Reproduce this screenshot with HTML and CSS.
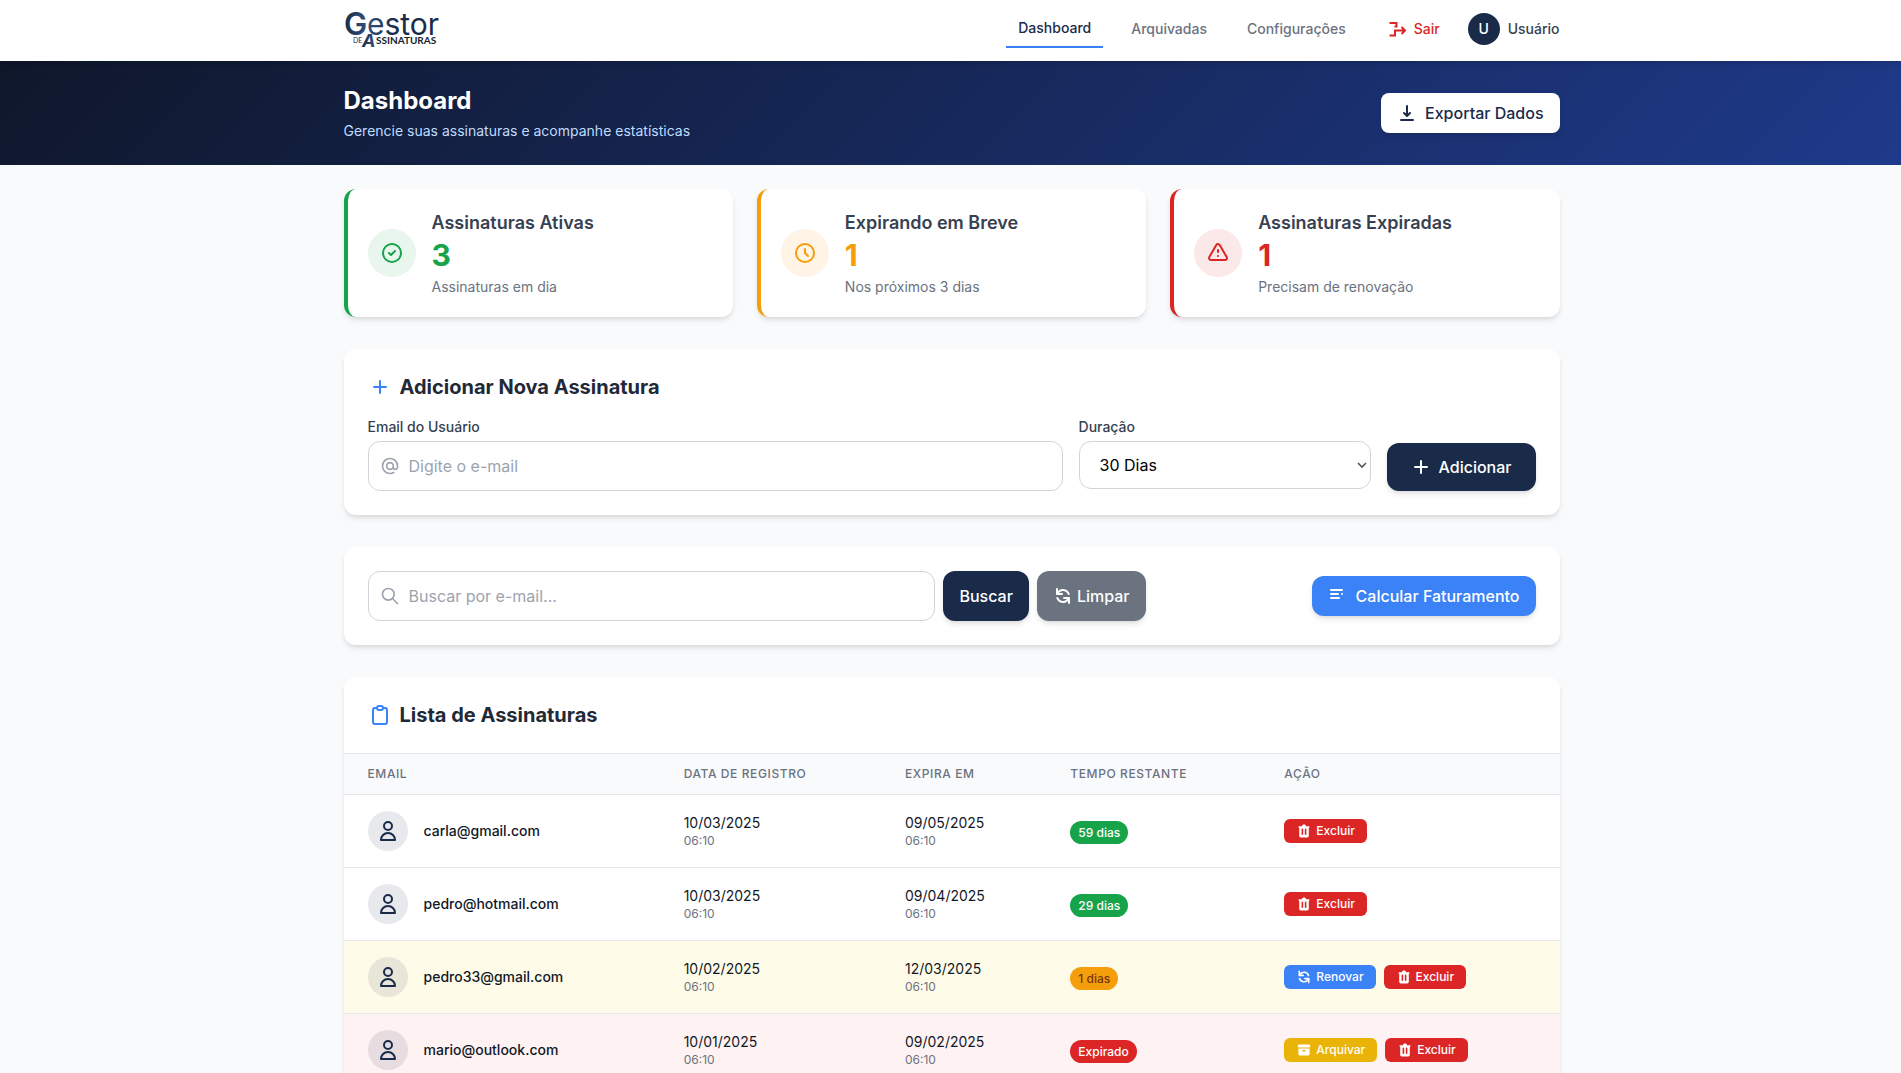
FILE: index.html
```html
<!DOCTYPE html>
<html lang="pt-BR">
<head>
<meta charset="utf-8">
<meta name="viewport" content="width=device-width, initial-scale=1">
<title>Gestor de Assinaturas</title>
<link rel="stylesheet" href="styles.css">
</head>
<body>
<svg class="sprite" aria-hidden="true">
  <symbol id="user" viewBox="0 0 24 24"><path class="line" d="M16 7a4 4 0 11-8 0 4 4 0 018 0zM12 14a7 7 0 00-7 7h14a7 7 0 00-7-7z"/></symbol>
  <symbol id="trash" viewBox="0 0 20 20"><path fill-rule="evenodd" d="M9 2a1 1 0 00-.894.553L7.382 4H4a1 1 0 000 2v10a2 2 0 002 2h8a2 2 0 002-2V6a1 1 0 100-2h-3.382l-.724-1.447A1 1 0 0011 2H9zM7 8a1 1 0 012 0v6a1 1 0 11-2 0V8zm5-1a1 1 0 00-1 1v6a1 1 0 102 0V8a1 1 0 00-1-1z"/></symbol>
  <symbol id="refresh" viewBox="0 0 20 20"><path fill-rule="evenodd" d="M4 2a1 1 0 011 1v2.101a7.002 7.002 0 0111.601 2.566 1 1 0 11-1.885.666A5.002 5.002 0 005.999 7H9a1 1 0 010 2H4a1 1 0 01-1-1V3a1 1 0 011-1zm.008 9.057a1 1 0 011.276.61A5.002 5.002 0 0014.001 13H11a1 1 0 110-2h5a1 1 0 011 1v5a1 1 0 11-2 0v-2.101a7.002 7.002 0 01-11.601-2.566 1 1 0 01.61-1.276z"/></symbol>
  <symbol id="archive" viewBox="0 0 20 20"><path d="M4 3a2 2 0 100 4h12a2 2 0 100-4H4z"/><path fill-rule="evenodd" d="M3 8h14v7a2 2 0 01-2 2H5a2 2 0 01-2-2V8zm5 3a1 1 0 011-1h2a1 1 0 110 2H9a1 1 0 01-1-1z"/></symbol>
</svg>

<header class="topbar">
  <div class="container topbar-inner">
    <a class="logo" href="#" aria-label="Gestor de Assinaturas">
      <svg width="98" height="38" viewBox="0 0 98 38">
        <defs>
          <linearGradient id="logo-fill" x1="0" y1="0" x2="1" y2="0">
            <stop offset="0" stop-color="#1a2b4a"/><stop offset="1" stop-color="#33507c"/>
          </linearGradient>
          <linearGradient id="logo-fill-end" x1="0" y1="0" x2="1" y2="0">
            <stop offset="0" stop-color="#33507c"/><stop offset=".4" stop-color="#1a2b4a"/>
          </linearGradient>
        </defs>
        <text class="logo-g" x="0" y="25" fill="url(#logo-fill)">G</text>
        <text class="logo-name" x="23" y="25" fill="url(#logo-fill-end)">estor</text>
        <text class="logo-de" x="9" y="33">DE</text>
        <text class="logo-a" x="18" y="37" fill="url(#logo-fill)">A</text>
        <text class="logo-sub" x="32" y="34">SSINATURAS</text>
      </svg>
    </a>
    <nav class="menu">
      <a class="menu-link active" href="#">Dashboard</a>
      <a class="menu-link" href="#">Arquivadas</a>
      <a class="menu-link" href="#">Configurações</a>
      <a class="menu-link exit" href="#">
        <svg class="i20" viewBox="0 0 20 20"><path class="line square" d="M3.500 4H10.500V7.500H8.500M3.500 16.500H9V11.500H19M15.500 8L19 11.500L15.500 15"/></svg>
        Sair
      </a>
      <div class="account"><span class="account-mark">U</span>Usuário</div>
    </nav>
  </div>
</header>

<section class="hero">
  <div class="container hero-inner">
    <div>
      <h1>Dashboard</h1>
      <p>Gerencie suas assinaturas e acompanhe estatísticas</p>
    </div>
    <button class="btn btn-export" type="button">
      <svg class="i20" viewBox="0 0 20 20"><path fill-rule="evenodd" d="M3 17a1 1 0 011-1h12a1 1 0 110 2H4a1 1 0 01-1-1zm3.293-7.707a1 1 0 011.414 0L9 10.586V3a1 1 0 112 0v7.586l1.293-1.293a1 1 0 111.414 1.414l-3 3a1 1 0 01-1.414 0l-3-3a1 1 0 010-1.414z"/></svg>
      Exportar Dados
    </button>
  </div>
</section>

<main class="container content">
  <section class="stats">
    <article class="card stat green">
      <span class="stat-icon"><svg class="i24" viewBox="0 0 24 24"><path class="line" d="M9 12l2 2 4-4m6 2a9 9 0 11-18 0 9 9 0 0118 0z"/></svg></span>
      <div><h2>Assinaturas Ativas</h2><strong>3</strong><p>Assinaturas em dia</p></div>
    </article>
    <article class="card stat amber">
      <span class="stat-icon"><svg class="i24" viewBox="0 0 24 24"><path class="line" d="M12 8v4l3 3m6-3a9 9 0 11-18 0 9 9 0 0118 0z"/></svg></span>
      <div><h2>Expirando em Breve</h2><strong>1</strong><p>Nos próximos 3 dias</p></div>
    </article>
    <article class="card stat red">
      <span class="stat-icon"><svg class="i24" viewBox="0 0 24 24"><path class="line" d="M12 9v2m0 4h.01m-6.938 4h13.856c1.54 0 2.502-1.667 1.732-3L13.732 4c-.77-1.333-2.694-1.333-3.464 0L3.34 16c-.77 1.333.192 3 1.732 3z"/></svg></span>
      <div><h2>Assinaturas Expiradas</h2><strong>1</strong><p>Precisam de renovação</p></div>
    </article>
  </section>

  <section class="card panel">
    <h2 class="panel-title">
      <svg class="i24" viewBox="0 0 24 24"><path class="line" d="M12 6v6m0 0v6m0-6h6m-6 0H6"/></svg>
      Adicionar Nova Assinatura
    </h2>
    <form class="add-form">
      <div class="field grow">
        <label for="email">Email do Usuário</label>
        <div class="input-wrap">
          <svg class="i20" viewBox="0 0 24 24"><path class="line" d="M16 12a4 4 0 10-8 0 4 4 0 008 0zm0 0v1.5a2.5 2.500 0 005 0V12a9 9 0 10-9 9m4.500-1.206a8.959 8.959 0 01-4.500 1.207"/></svg>
          <input id="email" type="email" placeholder="Digite o e-mail">
        </div>
      </div>
      <div class="field quarter">
        <label for="duration">Duração</label>
        <select id="duration"><option>30 Dias</option><option>60 Dias</option><option>90 Dias</option></select>
      </div>
      <button class="btn btn-add" type="button">
        <svg class="i20" viewBox="0 0 20 20"><path d="M10 3a1 1 0 011 1v5h5a1 1 0 110 2h-5v5a1 1 0 11-2 0v-5H4a1 1 0 110-2h5V4a1 1 0 011-1z"/></svg>
        Adicionar
      </button>
    </form>
  </section>

  <section class="card panel toolbar">
    <form class="search-form">
      <div class="input-wrap">
        <svg class="i20" viewBox="0 0 24 24"><path class="line" d="M21 21l-6-6m2-5a7 7 0 11-14 0 7 7 0 0114 0z"/></svg>
        <input type="text" aria-label="Buscar por e-mail" placeholder="Buscar por e-mail...">
      </div>
      <button class="btn btn-search" type="button">Buscar</button>
      <button class="btn btn-clear" type="button"><svg class="i20"><use href="#refresh"/></svg>Limpar</button>
    </form>
    <button class="btn btn-billing" type="button">
      <svg class="i20" viewBox="0 0 20 20"><path d="M3 3a1 1 0 000 2h11a1 1 0 100-2H3zM3 7a1 1 0 000 2h7a1 1 0 100-2H3zM14 7a1 1 0 000 2 1 1 0 000-2zM3 11a1 1 0 100 2h8a1 1 0 100-2H3z"/></svg>
      Calcular Faturamento
    </button>
  </section>

  <section class="card list">
    <h2 class="panel-title">
      <svg class="i24" viewBox="0 0 24 24"><path class="line" d="M9 5H7a2 2 0 00-2 2v12a2 2 0 002 2h10a2 2 0 002-2V7a2 2 0 00-2-2h-2M9 5a2 2 0 002 2h2a2 2 0 002-2M9 5a2 2 0 012-2h2a2 2 0 012 2"/></svg>
      Lista de Assinaturas
    </h2>
    <table>
      <colgroup><col class="c-email"><col class="c-start"><col class="c-end"><col class="c-left"><col></colgroup>
      <thead>
        <tr><th>Email</th><th>Data de Registro</th><th>Expira em</th><th>Tempo Restante</th><th>Ação</th></tr>
      </thead>
      <tbody>
        <tr>
          <td><div class="person"><span class="avatar"><svg class="i24"><use href="#user"/></svg></span>carla@gmail.com</div></td>
          <td>10/03/2025<small>06:10</small></td>
          <td>09/05/2025<small>06:10</small></td>
          <td><span class="badge ok">59 dias</span></td>
          <td><div class="actions"><button class="mini delete" type="button"><svg class="i16"><use href="#trash"/></svg>Excluir</button></div></td>
        </tr>
        <tr>
          <td><div class="person"><span class="avatar"><svg class="i24"><use href="#user"/></svg></span>pedro@hotmail.com</div></td>
          <td>10/03/2025<small>06:10</small></td>
          <td>09/04/2025<small>06:10</small></td>
          <td><span class="badge ok">29 dias</span></td>
          <td><div class="actions"><button class="mini delete" type="button"><svg class="i16"><use href="#trash"/></svg>Excluir</button></div></td>
        </tr>
        <tr class="row-warn">
          <td><div class="person"><span class="avatar"><svg class="i24"><use href="#user"/></svg></span>pedro33@gmail.com</div></td>
          <td>10/02/2025<small>06:10</small></td>
          <td>12/03/2025<small>06:10</small></td>
          <td><span class="badge soon">1 dias</span></td>
          <td><div class="actions"><button class="mini renew" type="button"><svg class="i16"><use href="#refresh"/></svg>Renovar</button><button class="mini delete" type="button"><svg class="i16"><use href="#trash"/></svg>Excluir</button></div></td>
        </tr>
        <tr class="row-late">
          <td><div class="person"><span class="avatar"><svg class="i24"><use href="#user"/></svg></span>mario@outlook.com</div></td>
          <td>10/01/2025<small>06:10</small></td>
          <td>09/02/2025<small>06:10</small></td>
          <td><span class="badge late">Expirado</span></td>
          <td><div class="actions"><button class="mini archive" type="button"><svg class="i16"><use href="#archive"/></svg>Arquivar</button><button class="mini delete" type="button"><svg class="i16"><use href="#trash"/></svg>Excluir</button></div></td>
        </tr>
      </tbody>
    </table>
  </section>
</main>
</body>
</html>
```
FILE: styles.css
```css
:root {
  --primary: #1a2b4a;
  --accent: #3b82f6;
  --green: #16a34a;
  --amber: #f59e0b;
  --red: #dc2626;
  --line: #e5e7eb;
  --muted: #6b7280;
}

*, *::before, *::after { box-sizing: border-box; }

body {
  margin: 0;
  background: #f9fafc;
  color: #111827;
  font: 400 16px/24px Inter, "Liberation Sans", sans-serif;
}

h1, h2, p { margin: 0; }
a { color: inherit; text-decoration: none; }
button, input, select { font: inherit; color: inherit; margin: 0; }
svg { display: block; flex: none; fill: currentColor; }

.sprite { position: absolute; width: 0; height: 0; }
.line { fill: none; stroke: currentColor; stroke-width: 2; stroke-linecap: round; stroke-linejoin: round; }
.line.square { stroke-linecap: butt; stroke-linejoin: miter; }
.i16 { width: 16px; height: 16px; }
.i20 { width: 20px; height: 20px; }
.i24 { width: 24px; height: 24px; }

.container {
  width: 100%;
  max-width: 1280px;
  margin: 0 auto;
  padding: 0 31px 0 33px;
}

/* Top bar */
.topbar {
  position: relative;
  z-index: 1;
  background: #fff;
  box-shadow: 0 4px 6px -1px rgb(0 0 0 / 10%), 0 2px 4px -2px rgb(0 0 0 / 10%);
}
.topbar-inner {
  display: flex;
  align-items: center;
  justify-content: space-between;
  padding-top: 10px;
  padding-bottom: 13px;
}
.logo svg { overflow: visible; }
.logo-g { font: 600 31px Inter, sans-serif; }
.logo-name { font: 400 30px Inter, sans-serif; }
.logo-de { font: 400 7px Lato, sans-serif; fill: #1f2937; }
.logo-a { font: italic 700 18px Inter, sans-serif; }
.logo-sub { font: 700 10px Lato, sans-serif; fill: #161d2c; }

.menu {
  display: flex;
  align-items: center;
  gap: 16px;
  font-size: 14px;
  line-height: 20px;
  font-weight: 500;
  color: var(--muted);
}
.menu-link { padding: 8px 12px; }
.menu-link.active { color: var(--primary); border-bottom: 2px solid var(--accent); }
.menu-link.exit { display: flex; align-items: center; gap: 8px; color: var(--red); }
.account { display: flex; align-items: center; gap: 8px; color: #374151; }
.account-mark {
  display: grid;
  place-items: center;
  width: 32px;
  height: 32px;
  border-radius: 50%;
  background: var(--primary);
  color: #fff;
}

/* Hero */
.hero { background: linear-gradient(135deg, #0f172a, #1e3a8a); color: #fff; }
.hero-inner {
  display: flex;
  align-items: center;
  justify-content: space-between;
  padding-top: 24px;
  padding-bottom: 24px;
}
.hero h1 { font-size: 24px; line-height: 32px; font-weight: 700; }
.hero p { margin-top: 4px; font-size: 14px; line-height: 20px; color: #bfdbfe; }

.btn {
  display: flex;
  align-items: center;
  justify-content: center;
  gap: 8px;
  padding: 8px 16px;
  border: 0;
  border-radius: 12px;
  color: #fff;
  font-weight: 500;
  box-shadow: 0 4px 6px -1px rgb(0 0 0 / 10%), 0 2px 4px -2px rgb(0 0 0 / 10%);
  cursor: pointer;
}
.btn-export { background: #fff; color: var(--primary); border-radius: 8px; }
.btn-add { background: var(--primary); padding: 12px 24px; }
.btn-search { background: var(--primary); }
.btn-clear { background: var(--muted); gap: 4px; }
.btn-billing { background: var(--accent); }

/* Cards */
.content {
  display: flex;
  flex-direction: column;
  gap: 32px;
  padding-top: 24px;
  padding-bottom: 32px;
}
.card {
  background: #fff;
  border-radius: 12px;
  box-shadow: 0 4px 6px -1px rgb(0 0 0 / 10%), 0 2px 4px -2px rgb(0 0 0 / 10%);
}

.stats { display: grid; grid-template-columns: repeat(3, 1fr); gap: 24px; }
.stat {
  display: flex;
  align-items: center;
  gap: 16px;
  padding: 20px;
  border-left: 4px solid currentColor;
}
.stat.green { color: var(--green); }
.stat.amber { color: var(--amber); }
.stat.red { color: var(--red); }
.stat-icon { display: grid; place-items: center; width: 48px; height: 48px; border-radius: 50%; }
.green .stat-icon { background: #e8f6ed; }
.amber .stat-icon { background: #fff4e5; }
.red .stat-icon { background: #fbe9e9; }
.stat h2 { font-size: 18px; line-height: 28px; font-weight: 600; color: #374151; }
.stat strong { display: block; font-size: 30px; line-height: 36px; font-weight: 700; }
.stat p { margin-top: 4px; font-size: 14px; line-height: 20px; color: var(--muted); }

.panel { padding: 24px; }
.panel-title {
  display: flex;
  align-items: center;
  gap: 8px;
  font-size: 20px;
  line-height: 28px;
  font-weight: 700;
  color: #1f2937;
}
.panel-title svg { color: var(--accent); }

/* Forms */
.add-form { display: flex; align-items: flex-end; gap: 16px; margin-top: 16px; }
.field { display: flex; flex-direction: column; gap: 4px; align-self: flex-start; }
.field label { font-size: 14px; line-height: 20px; font-weight: 500; color: #374151; }
.grow { flex: 1; }
.quarter { width: 25%; }
.input-wrap { position: relative; flex: 1; }
.input-wrap svg { position: absolute; left: 12px; top: 15px; color: #9ca3af; }
input, select {
  display: block;
  width: 100%;
  background: #fff;
  border: 1px solid #d1d5db;
  border-radius: 12px;
}
input { padding: 12px 16px 12px 40px; line-height: 24px; height: 50px; }
input::placeholder { color: #9ca3af; opacity: 1; }
select {
  appearance: none;
  height: 48px;
  padding: 0 20px;
  color: #000;
  background: #fff url("data:image/svg+xml,%3Csvg xmlns='http://www.w3.org/2000/svg' width='10' height='8' fill='none' stroke='%23555' stroke-width='1.6'%3E%3Cpath d='M1 2l4 4 4-4'/%3E%3C/svg%3E") no-repeat right 3px center;
}

.toolbar { display: flex; align-items: center; justify-content: space-between; }
.search-form { display: flex; gap: 8px; width: 778px; max-width: 70%; }

/* List */
.list { overflow: hidden; }
.list .panel-title { padding: 24px; }
table { width: 100%; border-collapse: collapse; table-layout: fixed; }
.c-email { width: 26%; }
.c-start { width: 18.2%; }
.c-end { width: 13.6%; }
.c-left { width: 17.6%; }
th {
  padding: 12px 24px;
  text-align: left;
  text-transform: uppercase;
  font-size: 12px;
  line-height: 16px;
  font-weight: 500;
  letter-spacing: .05em;
  color: var(--muted);
  background: #f9fafc;
}
tr { border-top: 1px solid var(--line); }
td { padding: 16px 24px; font-size: 14px; line-height: 20px; }
small { display: block; font-size: 12px; line-height: 16px; color: var(--muted); }
.row-warn { background: #fefce8; }
.row-late { background: #fef2f2; }

.person { display: flex; align-items: center; gap: 16px; font-weight: 500; }
.avatar {
  display: grid;
  place-items: center;
  width: 40px;
  height: 40px;
  border-radius: 50%;
  background: rgb(26 43 74 / 10%);
  color: var(--primary);
}
.badge {
  padding: 4px 8px;
  border-radius: 12px;
  font-size: 12px;
  font-weight: 500;
  color: #fff;
  vertical-align: -2px;
}
.ok { background: var(--green); }
.soon { background: var(--amber); color: #78350f; }
.late { background: var(--red); }

.actions { display: flex; gap: 8px; }
.mini {
  display: flex;
  align-items: center;
  gap: 4px;
  padding: 4px 12px;
  border: 0;
  border-radius: 6px;
  font-size: 12px;
  line-height: 16px;
  font-weight: 500;
  color: #fff;
  cursor: pointer;
}
.delete { background: var(--red); }
.renew { background: var(--accent); }
.archive { background: #eab308; }
```
